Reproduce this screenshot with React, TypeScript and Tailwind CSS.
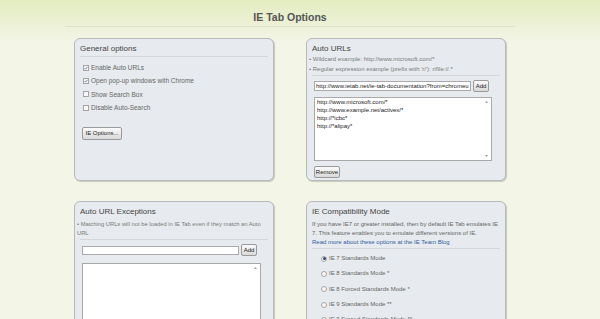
import type { ReactNode } from 'react'

const autoUrls = [
  'http://www.microsoft.com/*',
  'http://www.example.net/activex/*',
  'http://*icbc*',
  'http://*alipay*',
]

const modes = [
  'IE 7 Standards Mode',
  'IE 8 Standards Mode *',
  'IE 8 Forced Standards Mode *',
  'IE 9 Standards Mode **',
  'IE 9 Forced Standards Mode **',
]

function Panel({ title, desc, children, className = '' }: { title: string; desc?: ReactNode; children?: ReactNode; className?: string }) {
  return (
    <section
      className={`rounded-[6px] border border-[#b7b9bb] bg-[#e7eaee] px-[5px] pt-[4px] shadow-[1px_1px_1px_rgba(0,0,0,0.18)] overflow-hidden ${className}`}
    >
      <div className="border-b border-[#d3d6da] pb-[1px]">
        <h2 className="text-[8px] leading-[12px] text-[#444]">{title}</h2>
        {desc}
      </div>
      {children}
    </section>
  )
}

function Btn({ children, className = '' }: { children: ReactNode; className?: string }) {
  return (
    <button className={`flex items-center justify-center rounded-[2px] border border-[#9a9a9a] bg-gradient-to-b from-[#fbfbfb] to-[#d9d9d9] text-[6px] leading-none text-[#222] ${className}`}>
      {children}
    </button>
  )
}

function Checkbox({ checked, label }: { checked?: boolean; label: string }) {
  return (
    <label className="flex h-[13.4px] items-center gap-[2px] pl-[3px] text-[6.5px] text-[#666]">
      <span className="flex h-[6px] w-[6px] items-center justify-center border border-[#a4a4a4] bg-[#f7f7f7]">
        {checked && (
          <svg viewBox="0 0 10 10" className="h-[6px] w-[6px]">
            <path d="M1.5 5.2 L4 7.8 L8.6 2" fill="none" stroke="#2f5f9e" strokeWidth="1.8" />
          </svg>
        )}
      </span>
      {label}
    </label>
  )
}

function ListBox({ items, className = '' }: { items: string[]; className?: string }) {
  return (
    <div className={`flex border border-[#a9a9a9] bg-white ${className}`}>
      <ul className="flex-1 pl-[2px] pt-[1px] text-[6px] leading-[7.9px] text-[#222]">
        {items.map(i => (
          <li key={i}>{i}</li>
        ))}
      </ul>
      <div className="flex w-[9px] flex-col items-center justify-between py-[3px]">
        <svg viewBox="0 0 6 4" className="h-[2px] w-[3px]"><path d="M0 4 L3 0 L6 4Z" fill="#a0a0a0" /></svg>
        <svg viewBox="0 0 6 4" className="h-[2px] w-[3px]"><path d="M0 0 L3 4 L6 0Z" fill="#a0a0a0" /></svg>
      </div>
    </div>
  )
}

export default function App() {
  return (
    <div className="h-[319px] w-[600px] overflow-hidden bg-[#f3f5e7] bg-[linear-gradient(to_bottom,#e3ecc0,#f3f5e7_42px)] font-['Liberation_Sans',Arial,sans-serif]">
      <div className="ml-[65px] w-[450px]">
        <h1 className="border-b border-[#dde3c6] pb-[3px] pt-[11px] text-center text-[10.5px] font-bold leading-[12px] text-[#555]">
          IE Tab Options
        </h1>

        <div className="ml-[9px] mt-[11px] grid grid-cols-[200px_200px] gap-x-[32px] gap-y-[20px]">
          <Panel title="General options" className="h-[143px]">
            <div className="mt-[4px]">
              <Checkbox checked label="Enable Auto URLs" />
              <Checkbox checked label="Open pop-up windows with Chrome" />
              <Checkbox label="Show Search Box" />
              <Checkbox label="Disable Auto-Search" />
            </div>
            <Btn className="ml-[2px] mt-[12px] h-[13px] w-[40px] text-[6.5px]">IE Options...</Btn>
          </Panel>

          <Panel
            title="Auto URLs"
            className="h-[143px]"
            desc={
              <ul className="-ml-[3px] text-[6px] leading-[9.6px] text-[#7a7a7a]">
                <li>• Wildcard example: http://www.microsoft.com/*</li>
                <li>• Regular expression example (prefix with 'r/'): r/file://.*</li>
              </ul>
            }
          >
            <div className="ml-[2px] mt-[4px] flex items-center gap-[2px]">
              <div className="flex h-[10px] w-[157px] items-center overflow-hidden whitespace-nowrap border border-[#a9a9a9] bg-white pl-[1px] text-[6px] text-[#222]">
                http://www.ietab.net/ie-tab-documentation?from=chromeu
              </div>
              <Btn className="h-[12px] w-[16px]">Add</Btn>
            </div>
            <ListBox items={autoUrls} className="ml-[2px] mt-[5px] h-[64px] w-[178px]" />
            <Btn className="ml-[2px] mt-[5px] h-[12px] w-[26px]">Remove</Btn>
          </Panel>

          <Panel
            title="Auto URL Exceptions"
            className="h-[160px]"
            desc={
              <p className="-ml-[3px] pt-[2px] text-[5.8px] leading-[9px] text-[#7a7a7a]">
                • Matching URLs will not be loaded in IE Tab even if they match an Auto URL
              </p>
            }
          >
            <div className="ml-[2px] mt-[4px] flex items-center gap-[2px]">
              <div className="h-[9px] w-[157px] border border-[#a9a9a9] bg-white" />
              <Btn className="h-[12px] w-[16px]">Add</Btn>
            </div>
            <ListBox items={[]} className="ml-[2px] mt-[7px] h-[80px] w-[179px]" />
          </Panel>

          <Panel
            title="IE Compatibility Mode"
            className="h-[160px]"
            desc={
              <p className="pt-[2px] text-[6px] leading-[9px] text-[#666]">
                If you have IE7 or greater installed, then by default IE Tab emulates IE 7. This feature enables you to emulate different
                versions of IE.
                <br />
                <a className="text-[#2f5f9e]">Read more about these options at the IE Team Blog</a>
              </p>
            }
          >
            <div className="mt-[2px]">
              {modes.map((m, i) => (
                <label key={m} className="flex h-[15.3px] items-center gap-[2px] pl-[9px] text-[6px] text-[#666]">
                  <span className="flex h-[6px] w-[6px] items-center justify-center rounded-full border border-[#a4a4a4] bg-[#f7f7f7]">
                    {i === 0 && <span className="h-[3px] w-[3px] rounded-full bg-[#2f4f7e]" />}
                  </span>
                  {m}
                </label>
              ))}
            </div>
          </Panel>
        </div>
      </div>
    </div>
  )
}
